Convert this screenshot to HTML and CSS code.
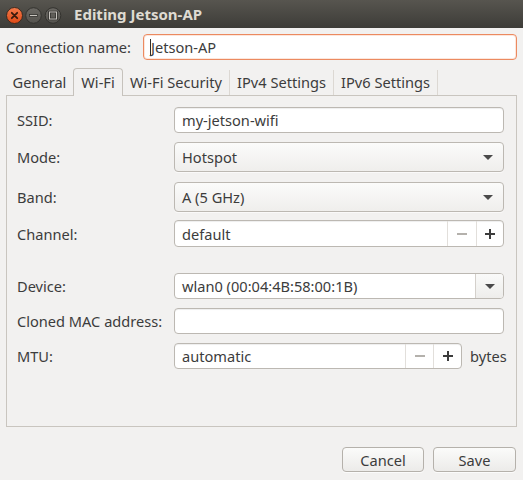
FILE: index.html
```html
<!DOCTYPE html>
<html>
<head>
<meta charset="utf-8">
<link rel="stylesheet" href="styles.css">
</head>
<body>
<div class="titlebar">
  <svg class="wm" width="64" height="28" viewBox="0 0 64 28">
    <defs>
      <linearGradient id="cl" x1="0" y1="0" x2="0" y2="1"><stop offset="0" stop-color="#f47a4b"/><stop offset="1" stop-color="#df4a16"/></linearGradient>
      <linearGradient id="gr" x1="0" y1="0" x2="0" y2="1"><stop offset="0" stop-color="#6b6964"/><stop offset="1" stop-color="#55534e"/></linearGradient>
    </defs>
    <circle cx="14.5" cy="15.5" r="8" fill="url(#cl)" stroke="#3a2a20" stroke-width="1"/>
    <path d="M11.8 12.8 L17.2 18.2 M17.2 12.8 L11.8 18.2" stroke="#3a1a0c" stroke-width="1.8" stroke-linecap="round"/>
    <circle cx="33.5" cy="15.5" r="7.8" fill="url(#gr)" stroke="#33322e" stroke-width="1"/>
    <rect x="29.5" y="14.5" width="8" height="2" fill="#c9c6c0" stroke="#2e2d2a" stroke-width="0.8"/>
    <circle cx="53" cy="15.5" r="7.8" fill="url(#gr)" stroke="#33322e" stroke-width="1"/>
    <rect x="49.5" y="12" width="7" height="7" fill="none" stroke="#2e2d2a" stroke-width="2.4"/>
    <rect x="49.5" y="12" width="7" height="7" fill="none" stroke="#c9c6c0" stroke-width="1"/>
  </svg>
  <div class="title">Editing Jetson-AP</div>
</div>

<div class="name-row">
  <label class="name-label">Connection name:</label>
  <div class="entry focus"><span class="cursor"></span>Jetson-AP</div>
</div>

<div class="notebook">
  <div class="tabs">
    <div class="tab w-general">General</div>
    <div class="tab active w-wifi">Wi-Fi</div>
    <div class="tab w-sec">Wi-Fi Security</div>
    <div class="tab w-v4">IPv4 Settings</div>
    <div class="tab w-v6">IPv6 Settings</div>
  </div>
  <div class="frame">
    <div class="row r-ssid">
      <div class="lbl">SSID:</div>
      <div class="field entry">my-jetson-wifi</div>
    </div>
    <div class="row r-mode">
      <div class="lbl">Mode:</div>
      <div class="field combo"><span>Hotspot</span><span class="arrow"></span></div>
    </div>
    <div class="row r-band">
      <div class="lbl">Band:</div>
      <div class="field combo"><span>A (5 GHz)</span><span class="arrow"></span></div>
    </div>
    <div class="row r-chan">
      <div class="lbl">Channel:</div>
      <div class="field spin">
        <span class="spin-text">default</span>
        <span class="sbtn minus"><svg width="12" height="12" viewBox="0 0 12 12"><rect x="1" y="5" width="10" height="2" fill="#b4b1ac"/></svg></span>
        <span class="sbtn plus"><svg width="12" height="12" viewBox="0 0 12 12"><rect x="1" y="5" width="10" height="2" fill="#3c3c3c"/><rect x="5" y="1" width="2" height="10" fill="#3c3c3c"/></svg></span>
      </div>
    </div>
    <div class="row r-dev">
      <div class="lbl">Device:</div>
      <div class="field combo-entry">
        <span class="ce-text">wlan0 (00:04:4B:58:00:1B)</span>
        <span class="ce-btn"><span class="arrow"></span></span>
      </div>
    </div>
    <div class="row r-mac">
      <div class="lbl">Cloned MAC address:</div>
      <div class="field entry"></div>
    </div>
    <div class="row r-mtu">
      <div class="lbl">MTU:</div>
      <div class="field mtu-field">
        <div class="spin mtu-spin">
          <span class="spin-text">automatic</span>
          <span class="sbtn minus"><svg width="12" height="12" viewBox="0 0 12 12"><rect x="1" y="5" width="10" height="2" fill="#b4b1ac"/></svg></span>
          <span class="sbtn plus"><svg width="12" height="12" viewBox="0 0 12 12"><rect x="1" y="5" width="10" height="2" fill="#3c3c3c"/><rect x="5" y="1" width="2" height="10" fill="#3c3c3c"/></svg></span>
        </div>
        <span class="unit">bytes</span>
      </div>
    </div>
  </div>
</div>

<div class="actions">
  <button class="btn cancel">Cancel</button>
  <button class="btn save">Save</button>
</div>
</body>
</html>
```
FILE: styles.css
```css
* { box-sizing: border-box; margin: 0; padding: 0; }
html, body { width: 523px; height: 480px; overflow: hidden; }
body {
  background: #f2f1f0;
  font-family: "Noto Sans", "DejaVu Sans", sans-serif;
  font-size: 14.6px;
  color: #3c3c3c;
  display: flex;
  flex-direction: column;
}

.titlebar {
  height: 28px;
  flex: none;
  background: linear-gradient(#57554f, #3d3c38);
  display: flex;
  align-items: center;
}
.wm { display: block; flex: none; }
.title {
  margin-left: 10px;
  color: #dfdbd2;
  font-weight: bold;
  font-size: 15px;
}

.name-row {
  display: flex;
  align-items: center;
  height: 26px;
  margin: 6px 6px 0 6px;
  flex: none;
}
.name-label { width: 137px; flex: none; }

.entry {
  display: flex;
  align-items: center;
  background: #fff;
  border: 1px solid #bcb8b2;
  border-radius: 4px;
  box-shadow: inset 0 1px 1px rgba(0,0,0,0.07);
  padding-left: 7px;
  height: 100%;
}
.name-row .entry { flex: 1; }
.entry.focus {
  border-color: #ec8a60;
  box-shadow: inset 0 0 0 1px rgba(245,160,120,0.25);
  padding-left: 6px;
}
.cursor {
  display: inline-block;
  width: 1px;
  height: 17px;
  background: #2c2c2c;
}

.notebook {
  margin: 8px 6px 0 6px;
  flex: none;
}
.tabs {
  display: flex;
  align-items: flex-end;
  height: 27px;
}
.tab {
  height: 25px;
  display: flex;
  align-items: center;
  justify-content: center;
  border-right: 1px solid #dcd8d3;
  color: #3c3c3c;
  padding-bottom: 1px;
}
.tab.w-general { width: 67px; border-right: none; }
.tab.w-wifi { width: 50px; }
.tab.w-sec { width: 107px; }
.tab.w-v4 { width: 104px; }
.tab.w-v6 { width: 104px; }
.tab.active {
  height: 28px;
  margin-bottom: -1px;
  position: relative;
  background: #f2f1f0;
  border: 1px solid #c6c2bc;
  border-bottom: none;
  border-radius: 4px 4px 0 0;
  padding-bottom: 2px;
}

.frame {
  height: 332px;
  border: 1px solid #c9c5bf;
  padding: 11px 12px 0 10px;
}
.row { display: flex; align-items: center; height: 26px; }
.lbl { width: 157px; flex: none; }
.field { width: 330px; flex: none; height: 100%; }
.r-mode { height: 30px; margin-top: 9px; }
.r-band { height: 30px; margin-top: 10px; }
.r-chan { height: 27px; margin-top: 8px; }
.r-dev { margin-top: 26px; }
.r-mac { margin-top: 9px; }
.r-mtu { margin-top: 9px; }

.combo {
  display: flex;
  align-items: center;
  justify-content: space-between;
  padding: 0 10px 0 7px;
  border: 1px solid #bcb8b2;
  border-radius: 4px;
  background: linear-gradient(#fbfbfa, #efeeec);
  box-shadow: 0 1px 0 rgba(255,255,255,0.6);
}
.arrow {
  width: 0;
  height: 0;
  border-left: 5px solid transparent;
  border-right: 5px solid transparent;
  border-top: 5px solid #4a4a4a;
}

.spin {
  display: flex;
  align-items: stretch;
  background: #fff;
  border: 1px solid #bcb8b2;
  border-radius: 4px;
  box-shadow: inset 0 1px 1px rgba(0,0,0,0.07);
}
.spin-text {
  flex: 1;
  display: flex;
  align-items: center;
  padding-left: 7px;
}
.sbtn {
  display: flex;
  align-items: center;
  justify-content: center;
  border-left: 1px solid #e2dfdb;
}
.sbtn svg { display: block; }
.sbtn.minus { width: 29px; }
.sbtn.plus { width: 27px; }

.combo-entry {
  display: flex;
  align-items: stretch;
  border: 1px solid #bcb8b2;
  border-radius: 4px;
  background: #fff;
  overflow: hidden;
}
.ce-text {
  flex: 1;
  display: flex;
  align-items: center;
  padding-left: 7px;
}
.ce-btn {
  width: 28px;
  display: flex;
  align-items: center;
  justify-content: center;
  border-left: 1px solid #d4d0cb;
  background: linear-gradient(#fafaf9, #eeedeb);
}

.mtu-field { display: flex; align-items: center; gap: 8px; }
.mtu-spin { width: 288px; height: 100%; flex: none; }
.mtu-spin .sbtn.minus { width: 28px; }
.mtu-spin .sbtn.plus { width: 28px; }

.actions {
  display: flex;
  justify-content: flex-end;
  gap: 9px;
  margin-top: 20px;
  padding-right: 7px;
}
.btn {
  height: 25px;
  font-family: inherit;
  font-size: 14.6px;
  color: #3c3c3c;
  border: 1px solid #b5b1ab;
  border-radius: 4px;
  background: linear-gradient(#fbfbfa, #ecebe9);
  box-shadow: 0 1px 0 rgba(255,255,255,0.7);
}
.btn.cancel { width: 82px; }
.btn.save { width: 83px; }
```
